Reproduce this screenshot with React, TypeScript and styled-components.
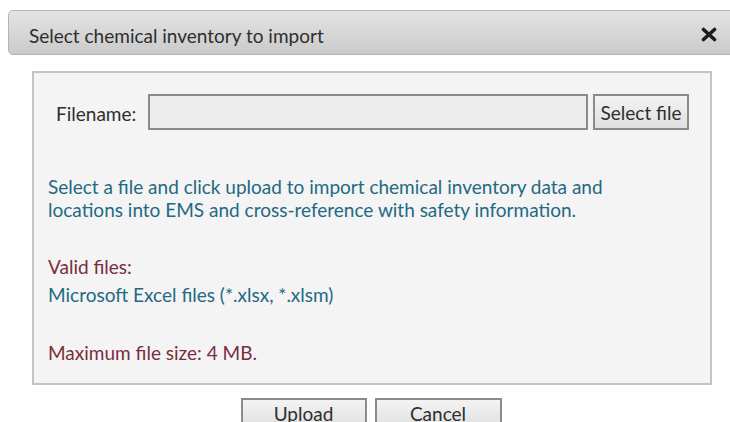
import React from "react";
import styled, { createGlobalStyle } from "styled-components";

const Global = createGlobalStyle`
  html, body { margin: 0; padding: 0; background: #ffffff; }
  body { font-family: Lato, "Open Sans", sans-serif; overflow: hidden; }
`;

const Page = styled.div`
  width: 730px;
  height: 422px;
  overflow: hidden;
  padding-top: 10px;
  box-sizing: border-box;
`;

const TitleBar = styled.div`
  display: flex;
  align-items: center;
  justify-content: space-between;
  height: 45px;
  box-sizing: border-box;
  margin-left: 8px;
  margin-right: -20px;
  padding: 5px 32px 0 20px;
  border: 1px solid #b4b4b4;
  border-radius: 5px;
  background: linear-gradient(#e4e4e4, #cacaca);
`;

const Title = styled.span`
  font-size: 19px;
  color: #2e2e2e;
`;

const Close = styled.svg`
  width: 16px;
  height: 15px;
  margin-top: -1px;
`;

const Panel = styled.div`
  margin: 16px 18px 0 32px;
  height: 314px;
  box-sizing: border-box;
  border: 2px solid #c4c4c4;
  background: #f4f4f4;
  padding: 21px 21px 0 14px;
  display: flex;
  flex-direction: column;
`;

const FileRow = styled.div`
  display: flex;
  align-items: center;
  gap: 5px;
  margin-left: 8px;
`;

const Label = styled.label`
  font-size: 19px;
  color: #2e2e2e;
  margin-right: 7px;
  padding-top: 2px;
`;

const FileInput = styled.div`
  flex: 1;
  height: 36px;
  box-sizing: border-box;
  border: 2px solid #8a8a8a;
  background: #ececec;
`;

const Button = styled.button<{ $w: number }>`
  width: ${(p) => p.$w}px;
  height: 36px;
  box-sizing: border-box;
  border: 2px solid #8a8a8a;
  background: linear-gradient(#f3f3f3, #e0e0e0);
  font-family: Lato, "Open Sans", sans-serif;
  font-size: 19px;
  color: #2e2e2e;
  padding: 0;
`;

const Text = styled.p<{ $tone: "info" | "note"; $top: number }>`
  margin: ${(p) => p.$top}px 0 0 0;
  font-size: 19px;
  line-height: 23px;
  color: ${(p) => (p.$tone === "info" ? "#236982" : "#7a2d3c")};
`;

const Actions = styled.div`
  display: flex;
  justify-content: center;
  gap: 8px;
  margin: 13px 0 0 12px;
`;

const ActionButton = styled(Button)`
  height: 32px;
  padding-bottom: 2px;
`;

export default function App() {
  return (
    <Page>
      <Global />
      <TitleBar>
        <Title>Select chemical inventory to import</Title>
        <Close viewBox="0 0 16 15">
          <path
            d="M2.5 2.5 L13.5 12.5 M13.5 2.5 L2.5 12.5"
            stroke="#1c1c1c"
            strokeWidth="3.6"
            strokeLinecap="round"
          />
        </Close>
      </TitleBar>
      <Panel>
        <FileRow>
          <Label>Filename:</Label>
          <FileInput />
          <Button $w={96}>Select file</Button>
        </FileRow>
        <Text $tone="info" $top={45}>
          Select a file and click upload to import chemical inventory data and
          <br />
          locations into EMS and cross-reference with safety information.
        </Text>
        <Text $tone="note" $top={34}>Valid files:</Text>
        <Text $tone="info" $top={5}>Microsoft Excel files (*.xlsx, *.xlsm)</Text>
        <Text $tone="note" $top={35}>Maximum file size: 4 MB.</Text>
      </Panel>
      <Actions>
        <ActionButton $w={126}>Upload</ActionButton>
        <ActionButton $w={127}>Cancel</ActionButton>
      </Actions>
    </Page>
  );
}
